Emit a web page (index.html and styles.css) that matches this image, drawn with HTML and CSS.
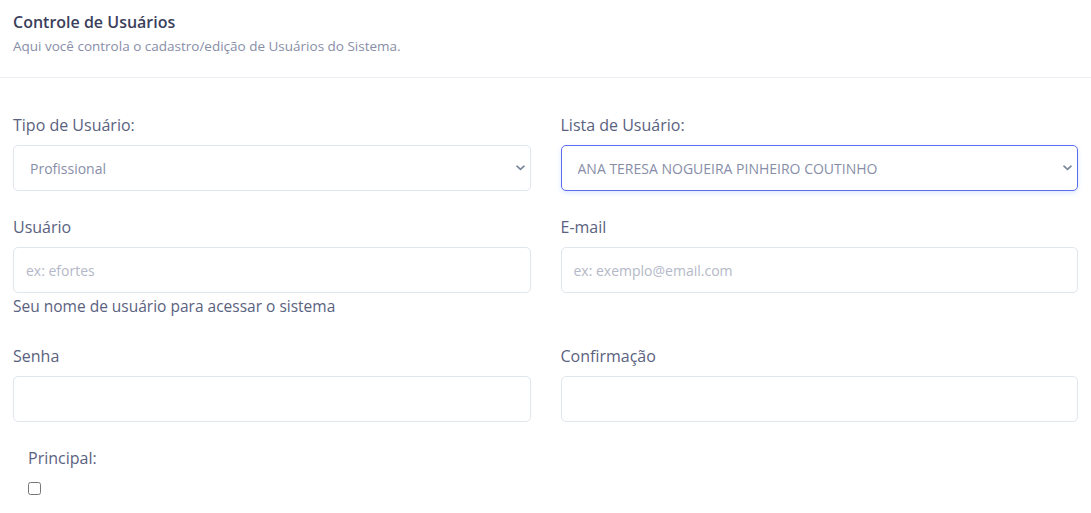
FILE: index.html
```html
<!DOCTYPE html>
<html lang="pt-BR">
<head>
<meta charset="utf-8">
<title>Controle de Usuários</title>
<link rel="stylesheet" href="styles.css">
</head>
<body>
<header class="page-head">
  <h1 class="page-title">Controle de Usuários</h1>
  <p class="page-sub">Aqui você controla o cadastro/edição de Usuários do Sistema.</p>
</header>
<form class="user-form">
  <div class="form-row">
    <div class="field">
      <label class="field-label">Tipo de Usuário:</label>
      <div class="select-wrap">
        <select class="control select">
          <option>Profissional</option>
        </select>
        <svg class="chev" width="9" height="6" viewBox="0 0 9 6"><path d="M1 1.2 L4.5 4.4 L8 1.2" fill="none" stroke="#7a879a" stroke-width="1.7" stroke-linecap="round" stroke-linejoin="round"/></svg>
      </div>
    </div>
    <div class="field">
      <label class="field-label">Lista de Usuário:</label>
      <div class="select-wrap">
        <select class="control select focused">
          <option>ANA TERESA NOGUEIRA PINHEIRO COUTINHO</option>
        </select>
        <svg class="chev" width="9" height="6" viewBox="0 0 9 6"><path d="M1 1.2 L4.5 4.4 L8 1.2" fill="none" stroke="#7a879a" stroke-width="1.7" stroke-linecap="round" stroke-linejoin="round"/></svg>
      </div>
    </div>
  </div>
  <div class="form-row">
    <div class="field">
      <label class="field-label">Usuário</label>
      <input class="control" type="text" placeholder="ex: efortes">
      <small class="help">Seu nome de usuário para acessar o sistema</small>
    </div>
    <div class="field">
      <label class="field-label">E-mail</label>
      <input class="control" type="text" placeholder="ex: exemplo@email.com">
    </div>
  </div>
  <div class="form-row">
    <div class="field">
      <label class="field-label">Senha</label>
      <input class="control" type="password">
    </div>
    <div class="field">
      <label class="field-label">Confirmação</label>
      <input class="control" type="password">
    </div>
  </div>
  <div class="check-block">
    <label class="field-label">Principal:</label>
    <input class="check" type="checkbox">
  </div>
</form>
</body>
</html>
```
FILE: styles.css
```css
html, body {
  margin: 0;
  padding: 0;
  background: #ffffff;
}
body {
  font-family: "Open Sans", "Noto Sans", sans-serif;
  color: #3b3f5c;
}
.page-head {
  padding: 12px 13px 23px;
  border-bottom: 1px solid #ebedf2;
}
.page-title {
  margin: 0;
  font-size: 16px;
  line-height: 20px;
  font-weight: 600;
  color: #3b3f5c;
}
.page-sub {
  margin: 6px 0 0;
  font-size: 13.5px;
  line-height: 16px;
  color: #888ea8;
}
.user-form {
  padding: 36px 13px 0;
}
.form-row {
  display: grid;
  grid-template-columns: 1fr 1fr;
  column-gap: 30px;
  margin-bottom: 25px;
}
.field {
  display: flex;
  flex-direction: column;
}
.field-label {
  font-size: 16px;
  line-height: 22px;
  color: #5a6280;
  margin-bottom: 9px;
}
.control {
  box-sizing: border-box;
  width: 100%;
  height: 46px;
  margin: 0;
  border: 1px solid #e0e6ed;
  border-radius: 5px;
  background: #ffffff;
  font-family: "Open Sans", "Noto Sans", sans-serif;
  font-size: 14px;
  color: #888ea8;
  padding: 0 12px;
  outline: none;
}
.control::placeholder {
  color: #b4b8c8;
}
.select-wrap {
  position: relative;
}
.select {
  appearance: none;
  -webkit-appearance: none;
  padding: 0 30px 0 16px;
}
.select.focused {
  border-color: #5b6cec;
  box-shadow: 0 2px 5px 0 rgba(194, 213, 255, 0.55);
}
.chev {
  position: absolute;
  right: 6px;
  top: 20px;
  pointer-events: none;
}
.help {
  font-size: 15.5px;
  line-height: 22px;
  color: #5a6280;
  margin-top: 2px;
  margin-bottom: 3px;
}
.check-block {
  display: flex;
  flex-direction: column;
  align-items: flex-start;
  padding-left: 15px;
}
.check-block .field-label {
  margin-bottom: 0;
}
.check {
  margin: 13px 0 0;
  width: 13px;
  height: 13px;
}
```
